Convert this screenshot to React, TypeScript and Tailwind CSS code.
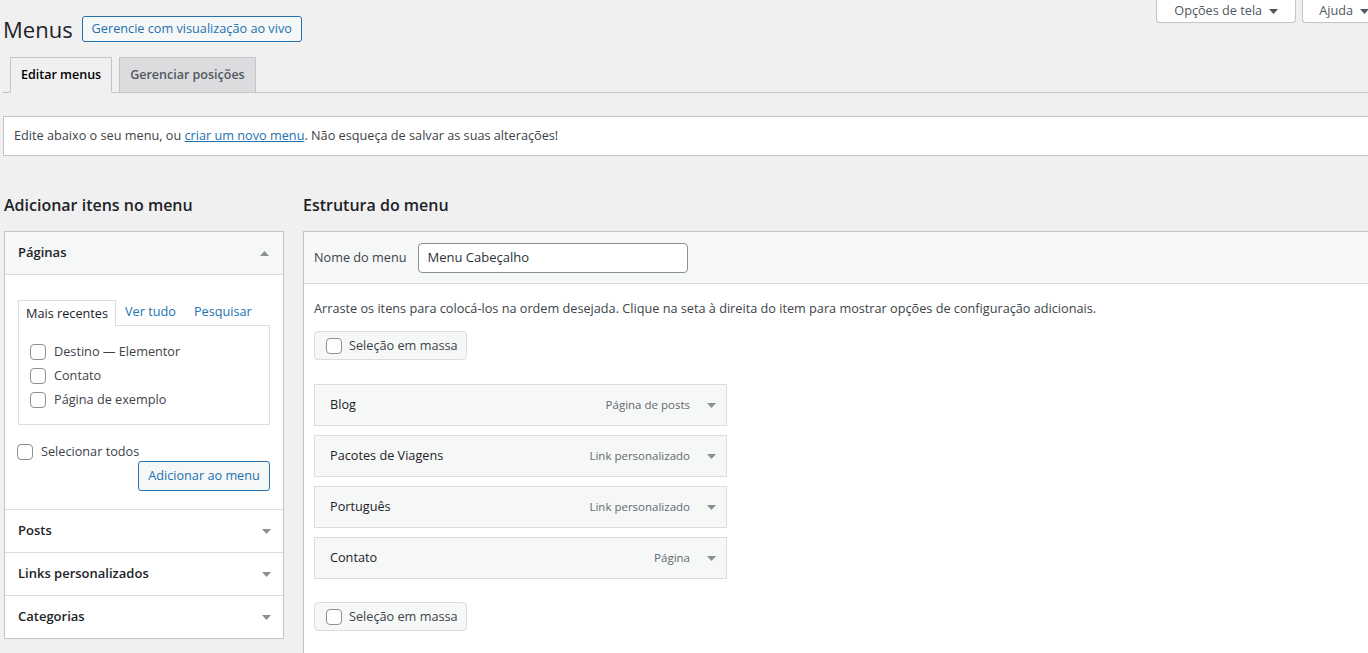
import React from 'react';

// --- Petits éléments réutilisables ---
const Caret: React.FC<{ up?: boolean; className?: string }> = ({ up = false, className = '' }) => (
  <svg width="9" height="5" viewBox="0 0 9 5" className={className}>
    <polygon points={up ? '0,5 9,5 4.5,0' : '0,0 9,0 4.5,5'} fill="currentColor" />
  </svg>
);

const Checkbox: React.FC = () => (
  <span className="inline-block w-4 h-4 shrink-0 rounded-[4px] border border-[#8c8f94] bg-white" />
);

interface MenuItem {
  title: string;
  type: string;
}

const menuItems: MenuItem[] = [
  { title: 'Blog', type: 'Página de posts' },
  { title: 'Pacotes de Viagens', type: 'Link personalizado' },
  { title: 'Português', type: 'Link personalizado' },
  { title: 'Contato', type: 'Página' },
];

const paginas = ['Destino — Elementor', 'Contato', 'Página de exemplo'];

const BulkSelect: React.FC = () => (
  <div className="w-[153px] h-[29px] flex items-center gap-[7px] px-[11px] border border-[#dcdcde] bg-[#f6f7f7] rounded-[4px] whitespace-nowrap">
    <Checkbox />
    <span>Seleção em massa</span>
  </div>
);

const AccordionRow: React.FC<{ label: string }> = ({ label }) => (
  <div className="h-[43px] border-t border-[#dcdcde] flex items-center justify-between pl-[13px] pr-[12px] bg-white">
    <span className="text-[13px] font-semibold text-[#1d2327]">{label}</span>
    <Caret className="text-[#8c8f94]" />
  </div>
);

export default function App() {
  return (
    <div className="w-full h-[653px] overflow-hidden bg-[#f0f0f1] font-['Open_Sans',sans-serif] text-[12.7px] text-[#3c434a]">
      <div className="w-[1392px]">
        {/* Onglets écran / aide */}
        <div className="float-right flex gap-[6px] mr-[6px]">
          <button className="h-[23px] px-[17px] flex items-center gap-[7px] bg-white border border-t-0 border-[#c3c4c7] rounded-b-[4px] text-[#50575e]">
            Opções de tela <Caret className="text-[#50575e]" />
          </button>
          <button className="h-[23px] px-[16px] flex items-center gap-[7px] bg-white border border-t-0 border-[#c3c4c7] rounded-b-[4px] text-[#50575e]">
            Ajuda <Caret className="text-[#50575e]" />
          </button>
        </div>

        {/* Titre */}
        <div className="pt-4 pl-[3px] flex items-center gap-[9px]">
          <h1 className="text-[22px] leading-[26px] text-[#1d2327]">Menus</h1>
          <button className="h-[26px] px-[9px] border border-[#2271b1] rounded-[3px] bg-[#f6f7f7] text-[#2271b1]">
            Gerencie com visualização ao vivo
          </button>
        </div>

        {/* Onglets de navigation */}
        <div className="mt-[15px] ml-[3px] pl-[7px] flex gap-[7px] border-b border-[#c3c4c7]">
          <div className="h-[36px] -mb-px px-[10px] flex items-center border border-[#c3c4c7] border-b-[#f0f0f1] bg-[#f0f0f1] text-[12.5px] font-semibold text-black">
            Editar menus
          </div>
          <div className="h-[35px] px-[10px] flex items-center border border-b-0 border-[#c3c4c7] bg-[#dcdcde] text-[12.5px] font-semibold text-[#50575e]">
            Gerenciar posições
          </div>
        </div>

        {/* Notice */}
        <div className="mt-[23px] ml-[3px] h-[40px] flex items-center px-[10px] border border-[#c3c4c7] bg-white">
          <p>
            Edite abaixo o seu menu, ou{' '}
            <a className="text-[#2271b1] underline">criar um novo menu</a>. Não esqueça de salvar as suas alterações!
          </p>
        </div>

        {/* Colonnes */}
        <div className="mt-[38px] ml-1 flex gap-[19px] items-start">
          {/* Colonne gauche */}
          <div className="w-[280px] shrink-0">
            <h2 className="text-[16px] leading-[22px] font-semibold text-[#1d2327]">Adicionar itens no menu</h2>
            <div className="mt-[15px] border border-[#c3c4c7] bg-white">
              <div className="h-[42px] bg-[#f6f7f7] flex items-center justify-between pl-[13px] pr-[14px]">
                <span className="text-[13px] font-semibold text-[#1d2327]">Páginas</span>
                <Caret up className="text-[#8c8f94]" />
              </div>
              <div className="border-t border-[#dcdcde] px-[13px] pt-[24px] pb-[18px]">
                <div className="flex items-end">
                  <div className="relative z-10 h-[26px] -mb-px px-[7px] flex items-center border border-b-0 border-[#dcdcde] bg-white text-[#1d2327]">
                    Mais recentes
                  </div>
                  <a className="px-[9px] h-[26px] flex items-center text-[#2271b1]">Ver tudo</a>
                  <a className="px-[9px] h-[26px] flex items-center text-[#2271b1]">Pesquisar</a>
                </div>
                <div className="h-[100px] border border-[#dcdcde] px-[11px] pt-[14px]">
                  {paginas.map((p) => (
                    <div key={p} className="h-[24px] flex items-center gap-[8px]">
                      <Checkbox />
                      <span>{p}</span>
                    </div>
                  ))}
                </div>
                <div className="mt-[16px] -ml-px h-[22px] flex items-center gap-[8px]">
                  <Checkbox />
                  <span>Selecionar todos</span>
                </div>
                <div className="-mt-[2px] flex justify-end">
                  <button className="h-[30px] w-[132px] border border-[#2271b1] rounded-[3px] bg-[#f6f7f7] text-[#2271b1]">
                    Adicionar ao menu
                  </button>
                </div>
              </div>
              <AccordionRow label="Posts" />
              <AccordionRow label="Links personalizados" />
              <AccordionRow label="Categorias" />
            </div>
          </div>

          {/* Colonne droite */}
          <div className="flex-1">
            <h2 className="text-[16px] leading-[22px] font-semibold text-[#1d2327]">Estrutura do menu</h2>
            <div className="mt-[15px] border-l border-t border-[#c3c4c7] bg-white h-[440px]">
              <div className="h-[52px] bg-[#f6f7f7] border-b border-[#dcdcde] flex items-center px-[10px] gap-[12px]">
                <span>Nome do menu</span>
                <div className="w-[270px] h-[30px] flex items-center px-[8px] border border-[#8c8f94] rounded-[4px] bg-white text-[13px] text-[#2c3338]">
                  Menu Cabeçalho
                </div>
              </div>
              <div className="px-[10px] pt-[15px]">
                <p className="leading-[18px]">
                  Arraste os itens para colocá-los na ordem desejada. Clique na seta à direita do item para mostrar opções de configuração adicionais.
                </p>
                <div className="mt-[14px]">
                  <BulkSelect />
                </div>
                <div className="mt-[24px] flex flex-col gap-[9px]">
                  {menuItems.map((m) => (
                    <div
                      key={m.title}
                      className="w-[413px] h-[42px] flex items-center justify-between pl-[15px] pr-[10px] border border-[#dcdcde] bg-[#f6f7f7]"
                    >
                      <span className="text-[#1d2327]">{m.title}</span>
                      <span className="flex items-center gap-[17px] text-[11.5px] text-[#646970]">
                        {m.type}
                        <Caret className="text-[#8c8f94]" />
                      </span>
                    </div>
                  ))}
                </div>
                <div className="mt-[23px]">
                  <BulkSelect />
                </div>
              </div>
            </div>
          </div>
        </div>
      </div>
    </div>
  );
}
